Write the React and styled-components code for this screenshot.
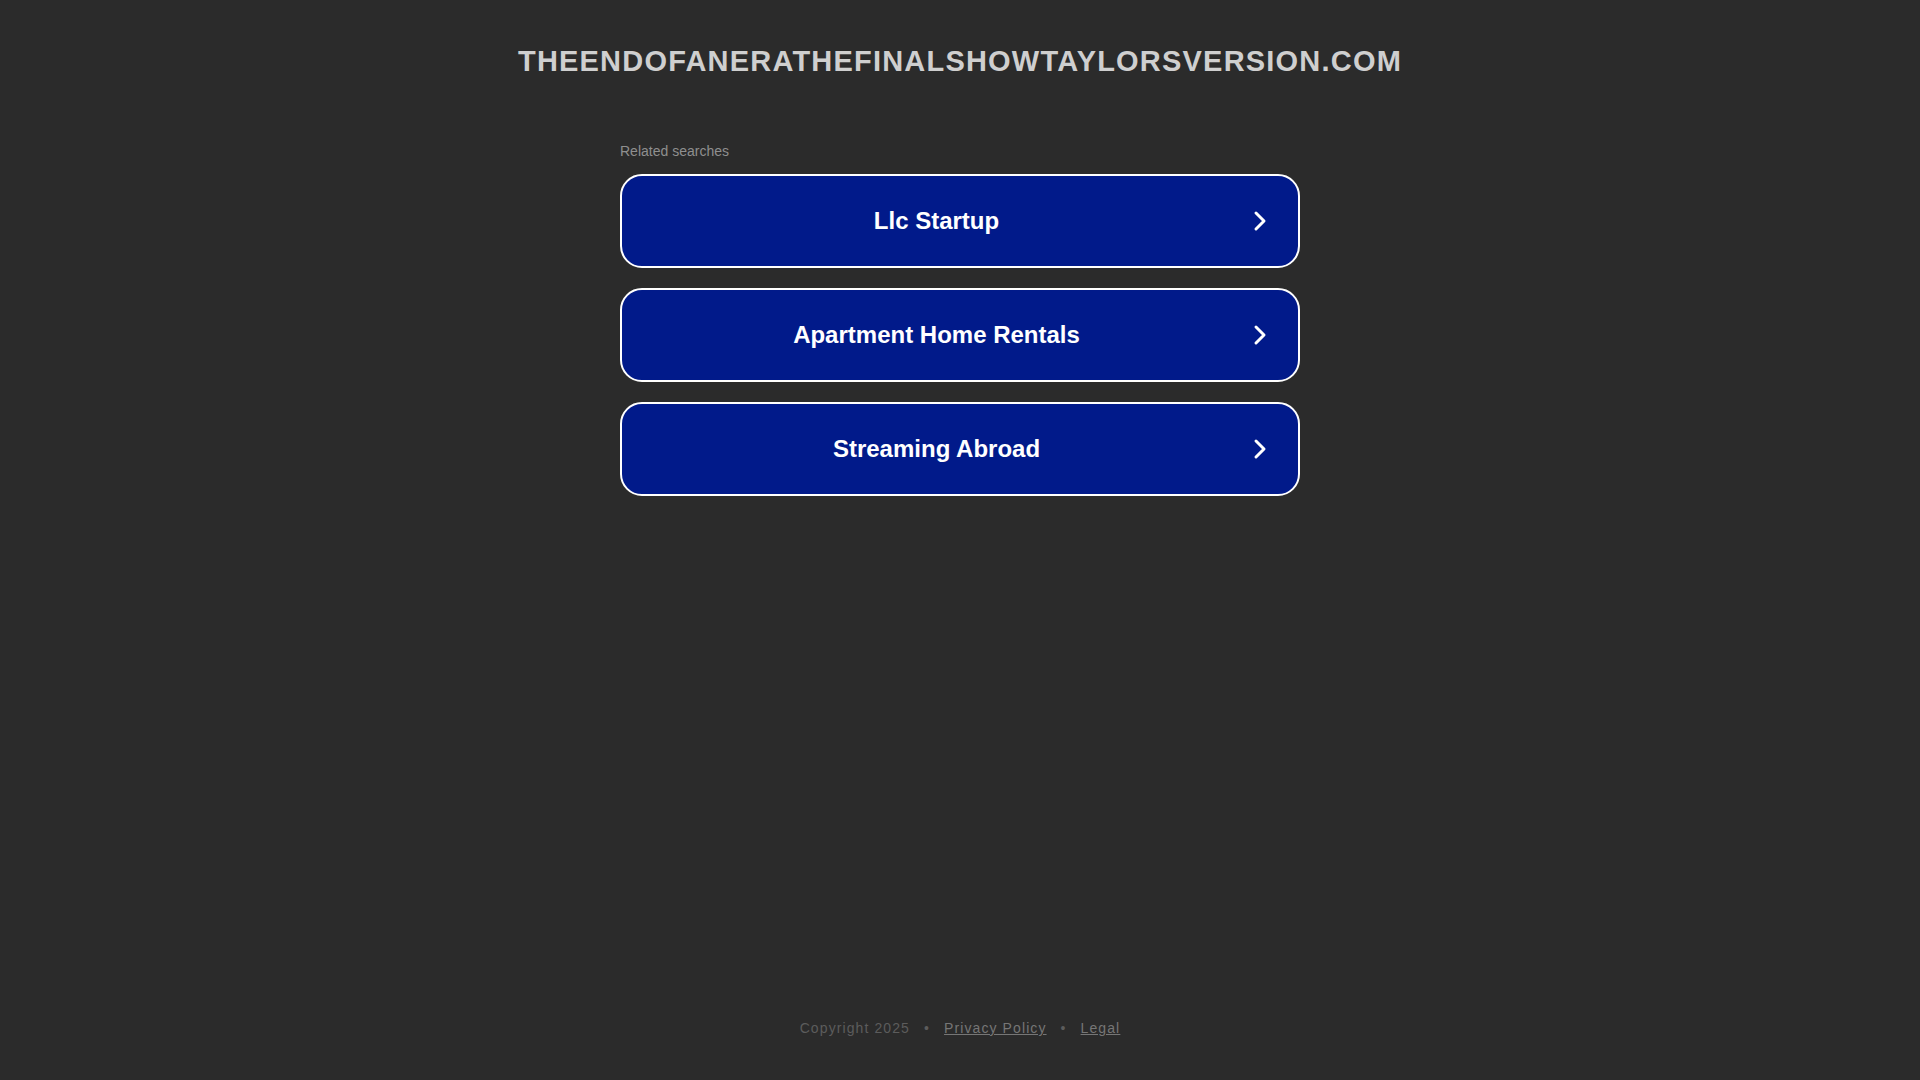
import React from "react";
import styled, { createGlobalStyle } from "styled-components";

const Global = createGlobalStyle`
  html, body { margin: 0; padding: 0; background: #2b2b2b; }
  body { font-family: "Liberation Sans", Arial, sans-serif; }
`;

const Page = styled.div`
  min-height: 1080px;
  display: flex;
  flex-direction: column;
  align-items: center;
`;

const Title = styled.h1`
  margin: 44px 0 0;
  font-size: 29px;
  line-height: 34px;
  font-weight: 700;
  letter-spacing: 1.2px;
  color: #cfcfcf;
  text-transform: uppercase;
`;

const Section = styled.div`
  width: 680px;
  margin-top: 65px;
  display: flex;
  flex-direction: column;
`;

const Label = styled.div`
  font-size: 14px;
  line-height: 16px;
  color: #8f8f8f;
  margin-bottom: 15px;
`;

const List = styled.div`
  display: flex;
  flex-direction: column;
  gap: 20px;
`;

const Item = styled.a`
  box-sizing: border-box;
  height: 94px;
  border: 2px solid #ffffff;
  border-radius: 22px;
  background: #011a8a;
  display: flex;
  align-items: center;
  padding: 0 31px 0 0;
  text-decoration: none;
  cursor: pointer;
`;

const ItemText = styled.span`
  flex: 1;
  text-align: center;
  color: #ffffff;
  font-size: 24px;
  font-weight: 700;
  padding-right: 2px;
`;

const Chevron = styled.svg`
  width: 14px;
  height: 22px;
  flex: none;
`;

const Footer = styled.footer`
  margin-top: auto;
  margin-bottom: 44px;
  font-size: 14px;
  letter-spacing: 1.1px;
  color: #5c5c5c;
  display: flex;
  gap: 14px;
  align-items: center;
`;

const FooterLink = styled.a`
  color: #767676;
  text-decoration: underline;
`;

const items = ["Llc Startup", "Apartment Home Rentals", "Streaming Abroad"];

export default function App() {
  return (
    <>
      <Global />
      <Page>
        <Title>theendofanerathefinalshowtaylorsversion.com</Title>
        <Section>
          <Label>Related searches</Label>
          <List>
            {items.map((t) => (
              <Item key={t}>
                <ItemText>{t}</ItemText>
                <Chevron viewBox="0 0 14 22">
                  <path d="M3 3 L11 11 L3 19" fill="none" stroke="#fff" strokeWidth="3" strokeLinecap="round" strokeLinejoin="round" />
                </Chevron>
              </Item>
            ))}
          </List>
        </Section>
        <Footer>
          <span>Copyright 2025</span>
          <span>•</span>
          <FooterLink>Privacy Policy</FooterLink>
          <span>•</span>
          <FooterLink>Legal</FooterLink>
        </Footer>
      </Page>
    </>
  );
}
